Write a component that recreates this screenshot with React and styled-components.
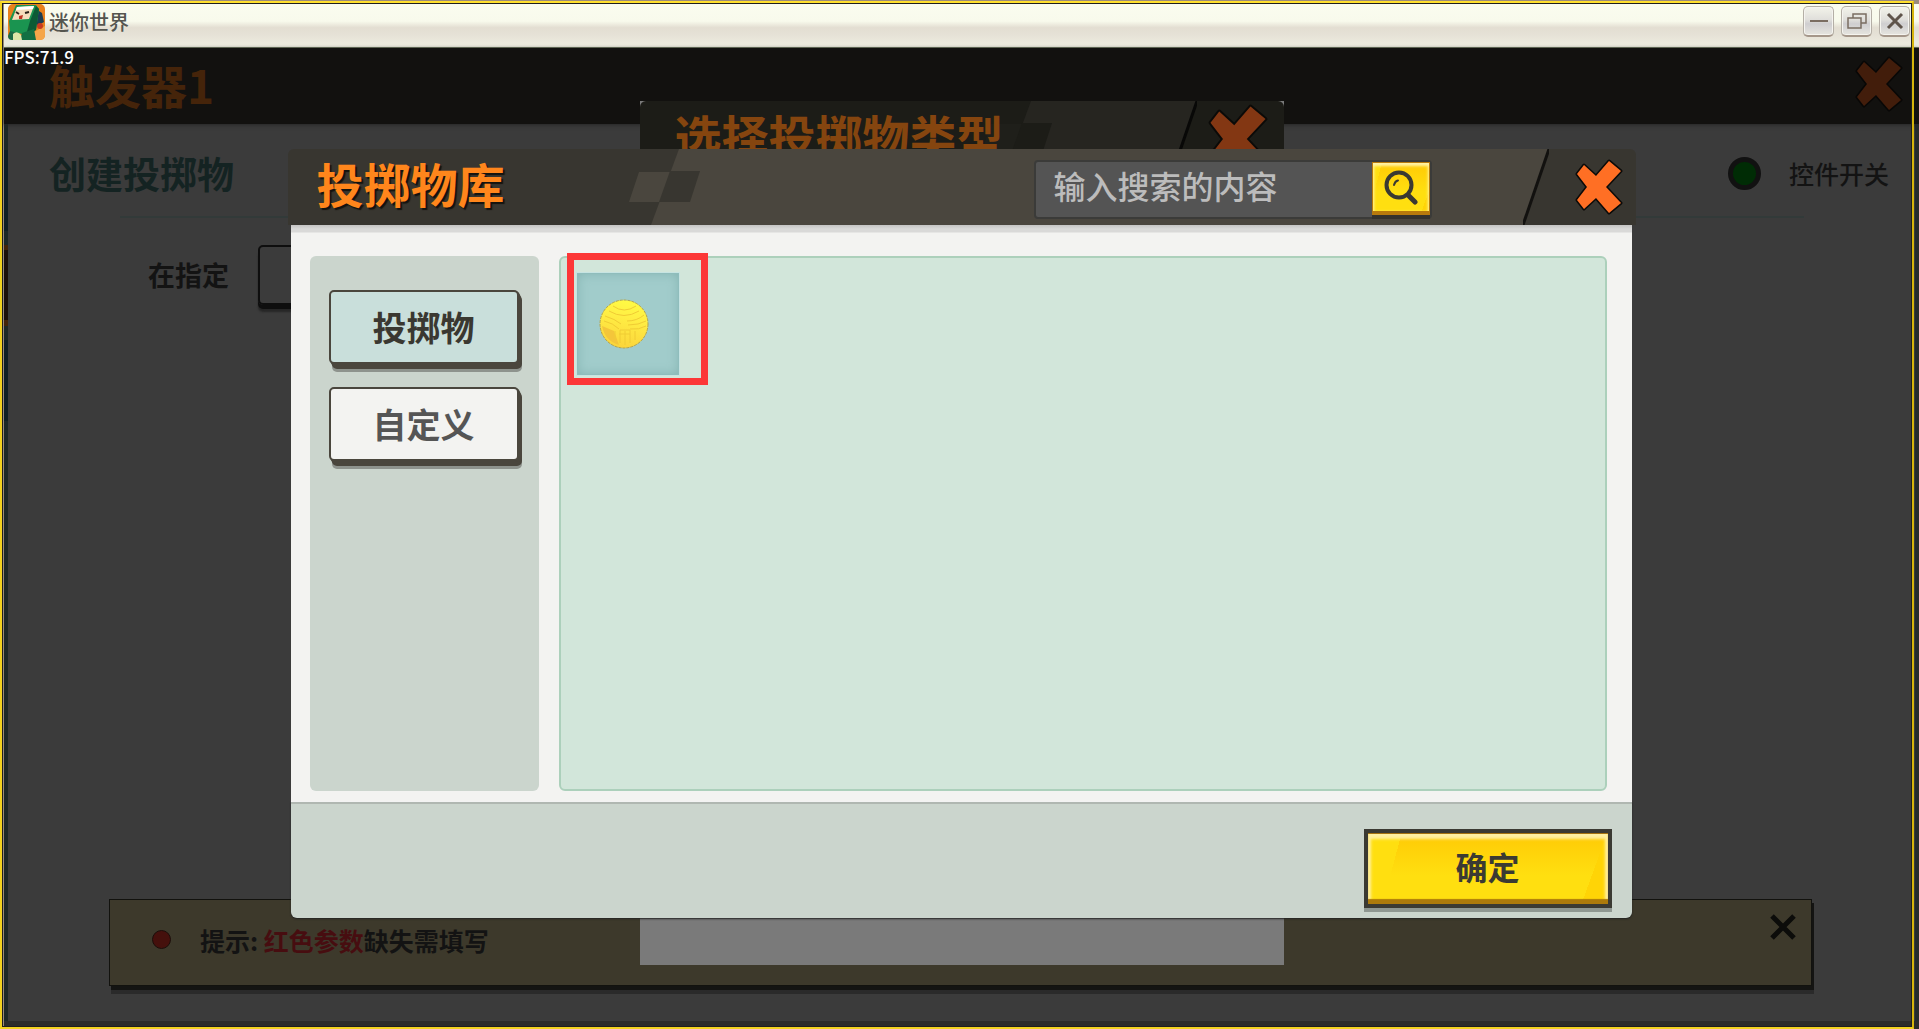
import styled, { createGlobalStyle, css } from "styled-components";

const GlobalStyle = createGlobalStyle`
  * {
    box-sizing: border-box;
  }
  body {
    margin: 0;
    font-family: "Noto Sans CJK SC", sans-serif;
    font-weight: 700;
    background: #3b3b3b;
  }
  button {
    padding: 0;
    border: 0;
    background: none;
    font: inherit;
    color: inherit;
    cursor: pointer;
  }
`;

const Window = styled.div`
  position: relative;
  display: flex;
  flex-direction: column;
  min-height: 100vh;
  padding: 4px 0 0 4px;
  background: #9a8b7c;
`;
const Frame = styled.div`
  position: absolute;
  inset: 1px 5px 0 0;
  border: 2px solid #f2d21f;
  border-top-color: #ffdf2e;
  border-right-color: #d6b40c;
  box-shadow: inset 0 0 0 1px #1e1e1e;
  pointer-events: none;
`;

/* title bar */
const TitleBar = styled.header`
  display: flex;
  align-items: center;
  justify-content: space-between;
  height: 44px;
  padding: 0 9px 8px 4px;
  border-bottom: 1px solid #6f7a62;
  background: linear-gradient(#fafcef 0, #f8faec 40%, #e3ded2 55%, #e5e1d6 70%, #efeee1 100%);
`;
const AppName = styled.div`
  display: flex;
  align-items: center;
  gap: 4px;
  height: 36px;
  font-size: 20px;
  line-height: 28px;
  font-weight: 500;
  color: #55554f;
`;
const WindowButtons = styled.div`
  display: flex;
  gap: 7px;
`;
const WindowButton = styled.button`
  display: flex;
  align-items: center;
  justify-content: center;
  width: 31px;
  height: 31px;
  border: 1px solid #b4afa6;
  border-bottom: 2px solid #a5978a;
  border-radius: 5px;
  background: linear-gradient(#f3f3ea, #e0dfdb 45%, #cfced0 60%, #e6e5df);
  box-shadow: inset 0 0 0 1px #f5f4ef;
`;

/* editor page */
const Game = styled.main`
  position: relative;
  flex: 1;
  display: flex;
  flex-direction: column;
  background: #3b3b3b;
`;
const Fps = styled.div`
  position: absolute;
  top: 0;
  left: 0;
  font-size: 17px;
  line-height: 18px;
  font-weight: 500;
  color: #fff;
`;
const PageHeader = styled.div`
  display: flex;
  align-items: center;
  justify-content: space-between;
  height: 76px;
  padding: 0 16px 4px 45px;
  background: #12110f;
  box-shadow: 0 1px 4px #262626;
  z-index: 0;
`;
const PageTitle = styled.h1`
  margin: 0;
  font-size: 46px;
  line-height: 46px;
  color: #45240a;
`;
const PageMain = styled.div`
  flex: 1;
  display: flex;
  border-bottom: 8px solid #2b2b2a;
`;
const Rail = styled.div`
  width: 4px;
  background: linear-gradient(
    #1c2827 26px,
    #0f1f24 26px 107px,
    #1c2827 107px 121px,
    #42240a 121px 126px,
    #1b100a 126px 196px,
    #42240a 196px 202px,
    #1c2827 202px 216px,
    #0f1f24 216px 297px,
    #1c2827 297px
  );
`;
const Content = styled.div`
  flex: 1;
  display: flex;
  flex-direction: column;
  border-right: 4px solid #242b2c;
`;
const ActionRow = styled.div`
  display: flex;
  align-items: center;
  justify-content: space-between;
  height: 92px;
  padding: 6px 26px 0 41px;
`;
const ActionName = styled.h2`
  margin: 0;
  font-size: 37px;
  line-height: 50px;
  color: #142322;
`;
const Toggle = styled.label`
  display: flex;
  align-items: center;
  gap: 28px;
  font-size: 25px;
  line-height: 34px;
  font-weight: 500;
  color: #131313;
`;
const ToggleInput = styled.input`
  appearance: none;
  width: 33px;
  height: 33px;
  margin: 0;
  border: 5px solid #111;
  border-radius: 50%;
  background: #002c05;
`;
const Divider = styled.hr`
  width: auto;
  height: 2px;
  margin: 0 111px 0 112px;
  border: 0;
  background: #323a39;
`;
const ParamRow = styled.div`
  display: flex;
  align-items: center;
  gap: 29px;
  padding: 27px 0 0 140px;
  font-size: 27px;
  line-height: 36px;
  color: #131313;
`;
const ParamBox = styled.button`
  width: 360px;
  height: 60px;
  border: 2px solid #0e0e0e;
  border-radius: 5px;
  box-shadow: 0 4px 0 #0e0e0e, 0 7px 2px #262626;
`;
const Tip = styled.div`
  display: flex;
  align-items: center;
  gap: 29px;
  height: 87px;
  margin: auto 103px 35px 101px;
  padding: 0 15px 6px 42px;
  border: 1px solid #12120e;
  background: #3d392b;
  box-shadow: 2px 4px 0 #141412, 2px 8px 0 #2a2a2a;
  font-size: 25px;
  line-height: 34px;
  color: #131313;
`;
const TipDot = styled.span`
  width: 19px;
  height: 19px;
  border: 1px solid #1c0e0a;
  border-radius: 50%;
  background: #45100c;
`;
const TipText = styled.p`
  flex: 1;
  margin: 0;
`;
const Missing = styled.span`
  color: #470d10;
`;
const TipClose = styled.button`
  align-self: flex-start;
  height: 26px;
  margin-top: 12px;
`;

/* stacked dialogs */
const Layer = styled.div`
  position: absolute;
  inset: 0;
  isolation: isolate;
  display: flex;
  flex-direction: column;
  align-items: center;
  padding: ${(props) => props.$padding};
`;
const Dialog = styled.section`
  flex: 1;
  display: flex;
  flex-direction: column;
  width: ${(props) => props.$width};
  background: ${(props) => props.$fill || "none"};
`;
const DialogHeader = styled.header`
  display: flex;
  height: 76px;
  border-radius: 6px 6px 0 0;
  background: ${(props) => props.$dark};
`;
const DialogTitle = styled.h2`
  z-index: 1;
  width: 341px;
  margin: 0;
  padding-left: ${(props) => props.$indent};
  font-size: 47px;
  line-height: 68px;
  white-space: nowrap;
  color: ${(props) => props.$color};
  text-shadow: ${(props) => (props.$shadow ? "2px 2px 1px #14130f" : "none")};
`;
const HeaderMiddle = styled.div`
  flex: 1;
  display: flex;
  align-items: center;
  justify-content: flex-end;
  padding: 4px 91px 0 0;
  background: ${(props) => props.$light};
`;
const HeaderEnd = styled.div`
  display: flex;
  align-items: center;
  justify-content: center;
  width: 87px;
  padding: ${(props) => props.$padding};
`;
const IconButton = styled.button`
  display: flex;
`;
const Search = styled.form`
  display: flex;
  width: 398px;
  height: 59px;
  border: 2px solid #3b3b39;
  border-radius: 4px;
  background: #545454;
`;
const SearchInput = styled.input`
  flex: 1;
  min-width: 0;
  padding: 0 0 8px 18px;
  border: 0;
  outline: 0;
  background: none;
  font: inherit;
  font-weight: 500;
  font-size: 32px;
  color: #fff;
  &::placeholder {
    color: #bcbcbc;
    opacity: 1;
  }
`;
const gold = css`
  background: linear-gradient(105deg, #ffdf10 13%, transparent 13%),
    linear-gradient(110deg, transparent 90%, #ffd406 90%),
    linear-gradient(#ffca05, #ffdf10 60%);
`;
const SearchButton = styled.button`
  display: flex;
  align-items: center;
  justify-content: center;
  width: 58px;
  height: 53px;
  border: solid #b87a0c;
  border-width: 1px 1px 4px;
  box-shadow: inset 0 2px 3px 1px #fff3a8, 0 4px 0 #33322d;
  ${gold}
`;
const DialogBody = styled.div`
  flex: 1;
  display: flex;
  gap: 20px;
  margin: 0 4px 0 3px;
  padding: 31px 25px 10px 19px;
  border-bottom: 1px solid #fff;
  background: linear-gradient(#c4c4c3, #d9d9d8 4px 7px, #f3f3f1 8px);
`;
const Tabs = styled.nav`
  display: flex;
  flex-direction: column;
  gap: 23px;
  width: 229px;
  padding: 34px 20px 0 19px;
  border-radius: 6px;
  background: #cbd5cd;
`;
const Tab = styled.button`
  height: 74px;
  border: 2px solid #4a463d;
  border-radius: 5px;
  background: ${(props) => (props.$active ? "#c9dfdb" : "#f3f3f1")};
  box-shadow: 1px 1px 0 #4a463d, 2px 3px 0 #4a463d, 3px 5px 0 #4a463d, 3px 8px 0 #8e938d;
  font-size: 34px;
  line-height: 46px;
  color: ${(props) => (props.$active ? "#3a3831" : "#555")};
`;
const Library = styled.div`
  flex: 1;
  padding: 14px 15px;
  border: 2px solid #acd0bb;
  border-radius: 6px;
  background: #d2e6da;
`;
const Item = styled.button`
  position: relative;
  display: flex;
  align-items: center;
  justify-content: center;
  width: 104px;
  height: 104px;
  padding: 0 8px 0 0;
  border: 1px solid #c6e4e2;
  background: #a1cccb;
  box-shadow: inset 0 0 0 1px #8fbdbc, inset 0 0 12px #82b2b0;
`;
const Highlight = styled.span`
  position: absolute;
  inset: -20px -29px -10px -10px;
  border: 7px solid #fc3737;
`;
const DialogFooter = styled.footer`
  display: flex;
  justify-content: flex-end;
  height: 116px;
  margin: 0 4px 0 3px;
  padding: 25px 20px 0 0;
  border-top: 2px solid #b0b7b1;
  border-radius: 0 0 6px 6px;
  background: #cbd5cd;
  box-shadow: 0 1px 2px #222;
`;
const Confirm = styled.button`
  width: 248px;
  height: 79px;
  padding-bottom: 6px;
  border: 4px solid #3b3a33;
  box-shadow: inset 0 -5px 1px #ad7a0b, inset 0 1px 0 #a4720f, inset 0 3px 3px 3px #fff0a0,
    0 4px 0 #8f9791;
  font-size: 32px;
  line-height: 44px;
  color: #3b3a33;
  ${gold}
`;

const Cross = ({ width = 48, fill, stroke = "#0b0a08" }) => (
  <svg width={width} viewBox="0 0 48 56" fill={fill} stroke={stroke} strokeWidth="3" strokeLinejoin="round">
    <path d="M9 6L2 15L12 28L2 41L9 50L21 39L34 54L46 44L31 28L46 12L34 2L21 17Z" paintOrder="stroke" />
  </svg>
);

const Checker = ({ dark, light, tile = light }) => (
  <svg width="71" height="76" viewBox="0 0 71 76">
    <path d="M0 0H71V76H0Z" fill={light} />
    <path d="M0 0H50L22 76H0Z" fill={dark} />
    <path d="M10 23H42L31 53H0Z" fill={tile} />
    <path d="M41 22H71L61 53H30Z" fill={dark} />
  </svg>
);

const Slant = ({ dark, light, line }) => (
  <svg width="26" height="76" viewBox="0 0 26 76">
    <path d="M0 0H26V76H0Z" fill={dark} />
    <path d="M0 0H26L0 76Z" fill={light} />
    <path d="M26 0L0 76" stroke={line} strokeWidth="3" />
  </svg>
);

const AppIcon = () => (
  <svg width="37" height="36" viewBox="0 0 37 36">
    <rect width="37" height="36" rx="5" fill="#e8801c" />
    <path d="M22 30L37 22V31Q37 36 32 36H20Z" fill="#f5a64a" />
    <path d="M2 27L10 27L12 36H4Q0 36 0 32Z" fill="#1d6b45" />
    <path d="M28 5L34 9L36 18L29 22Z" fill="#1c3d52" />
    <path d="M8 1L28 1L31 5L28 26L18 31L2 27L1 17Z" fill="#1a9450" />
    <path d="M22 17L28 2L31 5L28 26L18 31Z" fill="#0c5a35" />
    <path d="M9 3L26 2L21 15L4 16Z" fill="#f6dcbc" />
    <path d="M9 3L26 2L25 5L8 6Z" fill="#fff" />
    <path d="M8 8L11 10M17 9L21 8" stroke="#2a2018" strokeWidth="2" />
    <path d="M11 12L15 11L14 15L11 15Z" fill="#c03222" />
    <path d="M14 29L26 25L28 36H12Z" fill="#127043" />
    <path d="M5 30Q9 26 13 31L14 36H5Z" fill="#dfe6a8" />
    <circle cx="32" cy="22" r="3" fill="#c83a20" />
  </svg>
);

const Ball = () => (
  <svg width="50" height="50" viewBox="0 0 50 50">
    <defs>
      <linearGradient id="ball" x1="0.6" y1="0" x2="0.4" y2="1">
        <stop offset="0" stopColor="#fffb44" />
        <stop offset="0.35" stopColor="#ffee44" />
        <stop offset="1" stopColor="#fbd43a" />
      </linearGradient>
    </defs>
    <circle cx="25" cy="25" r="24" fill="url(#ball)" stroke="#b5a44a" strokeDasharray="3 1" />
    <path d="M3 27L15 32L20 46Q6 42 3 27Z" fill="#f4c63a" />
    <g fill="none" stroke="#f0cc34">
      <path d="M14 7Q25 15 37 7M10 12Q25 21 40 12M6 17Q16 20 22 25M28 22Q38 22 45 16M29 26Q40 26 47 22" />
      <path d="M5 22Q14 24 20 30M31 30Q40 31 47 27M21 31H31M20 35H31M21 31V44M26 32V46M31 31V44M16 32V40M36 32V41" />
    </g>
  </svg>
);

const backColors = { dark: "#1c1c17", light: "#262520" };
const frontColors = { dark: "#383630", light: "#4a463e" };

const BackDialog = () => (
  <Layer $padding="53px 0 64px">
    <Dialog $width="644px" $fill="#7a7a7a">
      <DialogHeader $dark={backColors.dark}>
        <DialogTitle $indent="35px" $color="#85450f">
          选择投掷物类型
        </DialogTitle>
        <Checker {...backColors} tile="#1f1f1a" />
        <HeaderMiddle $light={backColors.light} />
        <Slant {...backColors} line="#080807" />
        <HeaderEnd $padding="0 5px 0 0">
          <IconButton aria-label="关闭">
            <Cross width={60} fill="#833713" />
          </IconButton>
        </HeaderEnd>
      </DialogHeader>
    </Dialog>
  </Layer>
);

const LibraryDialog = () => (
  <Layer $padding="101px 0 111px">
    <Dialog $width="calc(100% - 567px)" role="dialog" aria-label="投掷物库">
      <DialogHeader $dark={frontColors.dark}>
        <DialogTitle $indent="29px" $color="#ff861c" $shadow>
          投掷物库
        </DialogTitle>
        <Checker {...frontColors} />
        <HeaderMiddle $light={frontColors.light}>
          <Search onSubmit={(e) => e.preventDefault()}>
            <SearchInput aria-label="搜索" placeholder="输入搜索的内容" />
            <SearchButton aria-label="搜索">
              <svg width="36" height="36" viewBox="0 0 36 36" fill="none" stroke="#3a3932" strokeLinecap="round">
                <circle cx="16" cy="16" r="12.500" strokeWidth="4" />
                <path d="M26 27L32 33" strokeWidth="5" />
                <path d="M11 16Q12 12 15 11.500" strokeWidth="2" />
              </svg>
            </SearchButton>
          </Search>
        </HeaderMiddle>
        <Slant {...frontColors} line="#12110f" />
        <HeaderEnd $padding="0 0 0 14px">
          <IconButton aria-label="关闭">
            <Cross fill="#ff6f24" />
          </IconButton>
        </HeaderEnd>
      </DialogHeader>
      <DialogBody>
        <Tabs>
          <Tab $active>投掷物</Tab>
          <Tab>自定义</Tab>
        </Tabs>
        <Library>
          <Item aria-label="投掷物">
            <Ball />
            <Highlight />
          </Item>
        </Library>
      </DialogBody>
      <DialogFooter>
        <Confirm>确定</Confirm>
      </DialogFooter>
    </Dialog>
  </Layer>
);

const App = () => (
  <Window>
    <GlobalStyle />
    <TitleBar>
      <AppName>
        <AppIcon />
        迷你世界
      </AppName>
      <WindowButtons>
        <WindowButton aria-label="最小化">
          <svg width="20" height="20" viewBox="0 0 20 20" stroke="#7a6d62" strokeWidth="2">
            <path d="M1 10H19" />
          </svg>
        </WindowButton>
        <WindowButton aria-label="还原">
          <svg width="20" height="20" viewBox="0 0 20 20" fill="none" stroke="#7a6d62" strokeWidth="1.500">
            <path d="M1 7H14V17H1Z" />
            <path d="M6 7V3H19V12H14" />
          </svg>
        </WindowButton>
        <WindowButton aria-label="关闭">
          <svg width="20" height="20" viewBox="0 0 20 20" stroke="#5f544b" strokeWidth="3">
            <path d="M3 3L17 17M17 3L3 17" />
          </svg>
        </WindowButton>
      </WindowButtons>
    </TitleBar>
    <Game>
      <PageHeader>
        <PageTitle>触发器1</PageTitle>
        <IconButton aria-label="关闭">
          <Cross fill="#421d0b" stroke="#080706" />
        </IconButton>
      </PageHeader>
      <PageMain>
        <Rail />
        <Content>
          <ActionRow>
            <ActionName>创建投掷物</ActionName>
            <Toggle>
              <ToggleInput type="checkbox" defaultChecked />
              控件开关
            </Toggle>
          </ActionRow>
          <Divider />
          <ParamRow>
            在指定
            <ParamBox aria-label="指定位置" />
          </ParamRow>
          <Tip>
            <TipDot />
            <TipText>
              提示: <Missing>红色参数</Missing>缺失需填写
            </TipText>
            <TipClose aria-label="关闭提示">
              <svg width="26" height="26" viewBox="0 0 26 26" stroke="#0c0c0a" strokeWidth="5">
                <path d="M2 2L24 24M24 2L2 24" />
              </svg>
            </TipClose>
          </Tip>
        </Content>
      </PageMain>
      <Fps>FPS:71.9</Fps>
      <BackDialog />
      <LibraryDialog />
    </Game>
    <Frame />
  </Window>
);

export default App;
